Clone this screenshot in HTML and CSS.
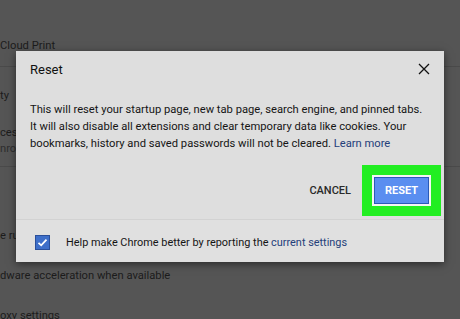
FILE: index.html
```html
<!DOCTYPE html>
<html lang="en">
<head>
    <meta charset="UTF-8">
    <meta name="viewport" content="width=device-width, initial-scale=1.0">
    <title>Reset</title>
    <link rel="stylesheet" href="styles.css">
</head>
<body>
    <div class="page">
        <div class="row row-top"><span class="bg-text">Cloud Print</span></div>
        <div class="row row-mid">
            <span class="bg-text t-ty">ty</span>
            <span class="bg-text t-ces">ces:</span>
            <span class="bg-text t-nro">nro</span>
        </div>
        <div class="row row-low">
            <span class="bg-text t-ru">e ru</span>
            <span class="bg-text t-hw">dware acceleration when available</span>
            <span class="bg-text t-proxy">oxy settings</span>
        </div>
    </div>

    <div class="dialog">
        <div class="dialog-head">
            <h2>Reset</h2>
            <svg class="close" width="12" height="12" viewBox="0 0 12 12">
                <path d="M1 1 L11 11 M11 1 L1 11" stroke="#111" stroke-width="1.3" fill="none"/>
            </svg>
        </div>
        <p class="dialog-body">This will reset your startup page, new tab page, search engine, and pinned tabs. It will also disable all extensions and clear temporary data like cookies. Your bookmarks, history and saved passwords will not be cleared. <a href="#">Learn more</a></p>
        <div class="actions">
            <button class="cancel-btn">CANCEL</button>
            <span class="highlight"><button class="reset-btn">RESET</button></span>
        </div>
        <div class="dialog-foot">
            <span class="checkbox">
                <svg width="13" height="13" viewBox="0 0 13 13">
                    <path d="M2.5 6.8 L5.2 9.3 L10.5 3.6" stroke="#fff" stroke-width="1.8" fill="none"/>
                </svg>
            </span>
            <span>Help make Chrome better by reporting the <a href="#">current settings</a></span>
        </div>
    </div>
</body>
</html>
```

FILE: styles.css
```css
body {
    margin: 0;
    width: 460px;
    height: 319px;
    overflow: hidden;
    background-color: #555;
    font-family: Roboto, "Liberation Sans", sans-serif;
    position: relative;
}
.page {
    display: flex;
    flex-direction: column;
}
.row {
    border-bottom: 1px solid #4a4a4a;
    display: flex;
    flex-direction: column;
}
.row-top {
    height: 66px;
    justify-content: flex-end;
}
.row-top .bg-text {
    margin-bottom: 13px;
}
.row-mid {
    height: 99px;
}
.row-low {
    height: 160px;
    border-bottom: none;
}
.bg-text {
    font-size: 11.2px;
    color: #1c1c1c;
    line-height: 15px;
    white-space: nowrap;
}
.t-ty { margin-top: 21px; }
.t-ces { margin-top: 22px; }
.t-nro { color: #2e2e2e; margin-top: 1px; }
.t-ru { margin-top: 61px; }
.t-hw { margin-top: 25px; }
.t-proxy { margin-top: 25px; }

.dialog {
    position: absolute;
    left: 16px;
    top: 51px;
    width: 428px;
    height: 211px;
    background-color: #dedede;
    box-shadow: 0 2px 8px rgba(0, 0, 0, 0.5);
    display: flex;
    flex-direction: column;
}
.dialog-head {
    display: flex;
    justify-content: space-between;
    align-items: center;
    padding: 10px 14px 0 14px;
    height: 16px;
}
.dialog-head h2 {
    margin: 0;
    font-size: 13px;
    font-weight: 400;
    color: #111;
}
.dialog-body {
    margin: 24px 14px 0 14px;
    font-size: 11.2px;
    line-height: 17px;
    color: #151515;
}
.dialog-body a,
.dialog-foot a {
    color: #25407a;
    text-decoration: none;
}
.actions {
    display: flex;
    justify-content: flex-end;
    align-items: center;
    gap: 11px;
    padding-right: 3px;
    margin-top: 13px;
}
.cancel-btn {
    background: none;
    border: none;
    font-family: inherit;
    font-size: 11px;
    font-weight: 500;
    color: #2a2a2a;
    padding: 0;
}
.highlight {
    background-color: #22ee22;
    padding: 10px;
    display: flex;
}
.reset-btn {
    width: 59px;
    height: 31px;
    background-color: #5a8ef0;
    border: 2px solid #f4f4f4;
    outline: 1px solid #2a5ab8;
    outline-offset: -3px;
    color: #fff;
    font-family: inherit;
    font-size: 11px;
    font-weight: 700;
    padding: 0;
}
.dialog-foot {
    margin-top: auto;
    height: 43px;
    box-sizing: border-box;
    padding-top: 3px;
    border-top: 1px solid #d2d2d2;
    background-color: #e0e0e0;
    display: flex;
    align-items: center;
    gap: 16px;
    padding-left: 19px;
    font-size: 10.9px;
    color: #151515;
}
.checkbox {
    width: 13px;
    height: 13px;
    background-color: #3e6fc9;
    border: 1px solid #2a4f9a;
    display: flex;
}
```
